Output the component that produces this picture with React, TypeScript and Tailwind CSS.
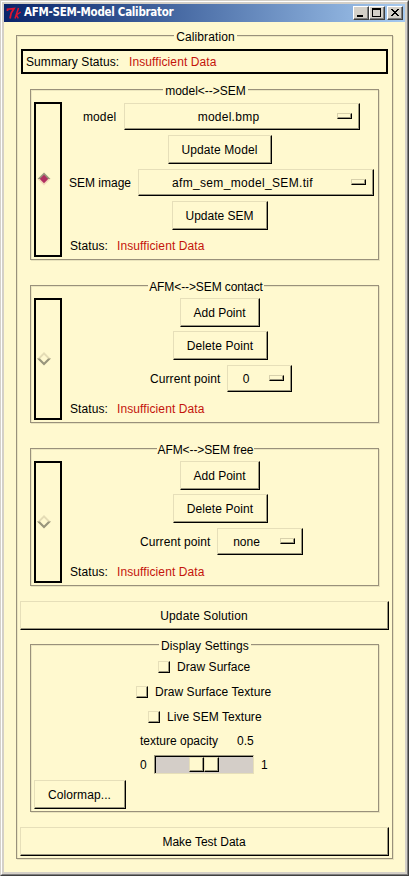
import type { ReactNode } from 'react';

const raised =
  'border border-t-[#e6dfb9] border-l-[#e6dfb9] border-r-black border-b-black shadow-[inset_-1px_-1px_0_#99957c]';

function Button({ children, className }: { children: ReactNode; className: string }) {
  return (
    <button
      className={`flex h-[29px] shrink-0 items-center justify-center whitespace-nowrap pr-px pt-px ${raised} ${className}`}
    >
      {children}
    </button>
  );
}

function OptionMenu({ children, className }: { children: ReactNode; className: string }) {
  return (
    <button className={`flex h-[27px] shrink-0 items-center whitespace-nowrap pr-[7px] ${raised} ${className}`}>
      <span className="flex-1 pr-[5px] text-center">{children}</span>
      <span className="mb-px h-[6px] w-[15px] border border-b-black border-l-[#d8d1ac] border-r-black border-t-[#d8d1ac] shadow-[inset_-1px_-1px_0_#99957c]" />
    </button>
  );
}

function Group({
  title,
  className,
  legendClass,
  children,
}: {
  title: string;
  className: string;
  legendClass: string;
  children: ReactNode;
}) {
  return (
    <section
      className={`flex flex-col border border-[#99917b] shadow-[1px_1px_0_#e9e3bc,inset_1px_1px_0_#ece6be] ${className}`}
    >
      <h2
        className={`-mt-[6px] flex h-[14px] shrink-0 items-center justify-center whitespace-nowrap bg-[#fff9cf] leading-[14px] ${legendClass}`}
      >
        {title}
      </h2>
      {children}
    </section>
  );
}

function Radio({ on }: { on?: boolean }) {
  return (
    <div className={`flex w-[28px] shrink-0 items-center border-2 border-black pl-px ${on ? 'pb-px' : ''}`}>
      <svg width="14" height="14" viewBox="0 0 14 14">
        {on ? (
          <>
            <path d="M0.5 7L7 0.5L13.5 7Z" fill="#99957c" />
            <path d="M0.5 7L7 13.5L13.5 7Z" fill="#f3d9ba" />
            <path d="M2.8 7L7 2.8L11.2 7L7 11.2Z" fill="#b03060" />
          </>
        ) : (
          <>
            <path d="M0 7L7 0L14 7H11.2L7 2.8L2.8 7Z" fill="#e4dcb5" />
            <path d="M0 6.5L7 13.5L14 6.5H11L7 10.5L3 6.5Z" fill="#99957c" />
          </>
        )}
      </svg>
    </div>
  );
}

function Status() {
  return (
    <div className="flex h-[14px] items-center gap-[9px] whitespace-nowrap leading-[14px]">
      <span className="w-[38px] tracking-[0.08px]">Status:</span>
      <span className="tracking-[0.1px] text-[#c4140c]">Insufficient Data</span>
    </div>
  );
}

function PointGroup({
  title,
  legendClass,
  className,
  labelClass,
  menuClass,
  value,
}: {
  title: string;
  legendClass: string;
  className: string;
  labelClass: string;
  menuClass: string;
  value: string;
}) {
  return (
    <Group title={title} className={`ml-[13px] h-[138px] w-[349px] ${className}`} legendClass={legendClass}>
      <div className="mt-[4px] flex h-[122px] pl-[3px]">
        <Radio />
        <div className="flex flex-col pl-[8px]">
          <Button className="ml-[110px] w-[80px]">Add Point</Button>
          <Button className="ml-[103px] mt-[4px] w-[95px] tracking-[0.08px]">Delete Point</Button>
          <div className="mt-[5px] flex items-center whitespace-nowrap">
            <span className={`tracking-[0.08px] ${labelClass}`}>Current point</span>
            <OptionMenu className={menuClass}>{value}</OptionMenu>
          </div>
          <div className="mt-[10px]">
            <Status />
          </div>
        </div>
      </div>
    </Group>
  );
}

function Check({ label, className }: { label: string; className: string }) {
  return (
    <label className={`flex h-[12px] items-center whitespace-nowrap ${className}`}>
      <span className={`mr-[7px] h-[12px] w-[12px] ${raised}`} />
      <span className="tracking-[0.05px]">{label}</span>
    </label>
  );
}

function TitleButton({ children, className }: { children: ReactNode; className?: string }) {
  return (
    <button
      className={`flex h-[14px] w-[16px] items-center justify-center border border-b-[#404040] border-l-white border-r-[#404040] border-t-white bg-[#d4d0c8] shadow-[inset_-1px_-1px_0_#808080] ${className ?? ''}`}
    >
      <svg
        className="shrink-0"
        width="14"
        height="12"
        viewBox="0 0 14 12"
        shapeRendering="crispEdges"
        fill="none"
        stroke="#000"
      >
        {children}
      </svg>
    </button>
  );
}

export default function App() {
  return (
    <div className="h-[876px] w-[409px] overflow-hidden border border-b-[#404040] border-l-[#d4d0c8] border-r-[#404040] border-t-[#d4d0c8] bg-[#d4d0c8] font-['Liberation_Sans',Arial,sans-serif] text-[12px] text-black">
      <div className="h-[874px] border border-b-[#808080] border-l-white border-r-[#808080] border-t-white p-[2px]">
        <header className="flex h-[18px] items-center bg-linear-to-r from-[#0a246a] to-[#a6caf0] pl-[2px] pr-[2px]">
          <svg width="16" height="16" viewBox="0 0 16 16" fill="none" stroke="#dc1430">
            <path d="M1.5 6V4.2L8 3.6L5.2 8L4 13.5" strokeWidth="1.8" />
            <path d="M12.5 3L9 13.5M14.8 7L10.3 10L12.3 13.3" strokeWidth="1.5" />
          </svg>
          <h1 className="ml-[2px] flex-1 whitespace-nowrap font-['DejaVu_Sans_Condensed','DejaVu_Sans',sans-serif] text-[11.5px] font-bold tracking-[-0.28px] text-white">
            AFM-SEM-Model Calibrator
          </h1>
          <TitleButton>
            <path d="M3 9H9" strokeWidth="2" />
          </TitleButton>
          <TitleButton>
            <path d="M2.5 2.5H10.5V9.5H2.5Z" />
            <path d="M2 2H11" strokeWidth="2" />
          </TitleButton>
          <TitleButton className="ml-[2px]">
            <path
              d="M3 2.5H5M9 2.5H11M4 3.5H6M8 3.5H10M5 4.5H9M6 5.5H8M5 6.5H9M4 7.5H6M8 7.5H10M3 8.5H5M9 8.5H11"
              strokeWidth="1"
            />
          </TitleButton>
        </header>
        <main className="h-[850px] bg-[#fff9cf] pl-[12px] pt-[13px]">
          <Group title="Calibration" className="h-[824px] w-[377px]" legendClass="ml-[157px] w-[63px] tracking-[0.1px]">
            <div className="ml-[4px] mt-[5px] flex h-[25px] w-[367px] shrink-0 items-center whitespace-nowrap border-2 border-black pl-[3px]">
              <span className="w-[103px] tracking-[0.08px]">Summary Status:</span>
              <span className="tracking-[0.1px] text-[#c4140c]">Insufficient Data</span>
            </div>

            <Group
              title="model<-->SEM"
              className="ml-[13px] mt-[15px] h-[171px] w-[349px]"
              legendClass="ml-[132px] w-[85px]"
            >
              <div className="mt-[4px] flex h-[155px] pl-[3px]">
                <Radio on />
                <div className="flex flex-col pl-[8px] pt-px">
                  <div className="flex items-center whitespace-nowrap">
                    <span className="ml-[13px] w-[41px] tracking-[0.1px]">model</span>
                    <OptionMenu className="w-[236px] tracking-[0.25px]">model.bmp</OptionMenu>
                  </div>
                  <Button className="ml-[98px] mt-[5px] w-[104px] tracking-[0.1px]">Update Model</Button>
                  <div className="mt-[5px] flex items-center whitespace-nowrap">
                    <span className="-ml-px w-[69px]">SEM image</span>
                    <OptionMenu className="w-[236px] tracking-[0.33px]">afm_sem_model_SEM.tif</OptionMenu>
                  </div>
                  <Button className="ml-[102px] mt-[5px] w-[96px]">Update SEM</Button>
                  <div className="mt-[9px]">
                    <Status />
                  </div>
                </div>
              </div>
            </Group>

            <PointGroup
              title="AFM<-->SEM contact"
              className="mt-[25px]"
              legendClass="ml-[117px] w-[116px] tracking-[-0.1px]"
              labelClass="ml-[80px] w-[77px]"
              menuClass="w-[65px]"
              value="0"
            />
            <PointGroup
              title="AFM<-->SEM free"
              className="mt-[25px]"
              legendClass="ml-[126px] w-[97px] tracking-[-0.1px]"
              labelClass="ml-[70px] w-[77px]"
              menuClass="w-[86px]"
              value="none"
            />

            <Button className="ml-[3px] mt-[15px] w-[369px] tracking-[0.15px]">Update Solution</Button>

            <Group
              title="Display Settings"
              className="ml-[13px] mt-[14px] h-[168px] w-[349px]"
              legendClass="ml-[128px] w-[92px] tracking-[0.12px]"
            >
              <Check label="Draw Surface" className="ml-[127px] mt-[8px]" />
              <Check label="Draw Surface Texture" className="ml-[105px] mt-[13px]" />
              <Check label="Live SEM Texture" className="ml-[117px] mt-[13px]" />
              <div className="ml-[109px] mt-[11px] flex h-[14px] items-center whitespace-nowrap">
                <span className="w-[97px]">texture opacity</span>
                <span>0.5</span>
              </div>
              <div className="ml-[109px] mt-[7px] flex h-[19px] items-center">
                <span className="w-[14px]">0</span>
                <div className="flex h-[19px] w-[100px] border border-b-[#e6dfb9] border-l-[#99957c] border-r-[#e6dfb9] border-t-[#99957c] bg-[#d4cec8] pl-[34px] pt-px shadow-[inset_1px_1px_0_#000]">
                  <span className={`h-[15px] w-[15px] bg-[#fff9cf] ${raised}`} />
                  <span className={`h-[15px] w-[15px] bg-[#fff9cf] ${raised}`} />
                </div>
                <span className="ml-[7px]">1</span>
              </div>
              <Button className="ml-[3px] mt-[6px] w-[92px] tracking-[0.1px]">Colormap...</Button>
            </Group>

            <Button className="ml-[3px] mt-[15px] w-[369px]">Make Test Data</Button>
          </Group>
        </main>
      </div>
    </div>
  );
}
